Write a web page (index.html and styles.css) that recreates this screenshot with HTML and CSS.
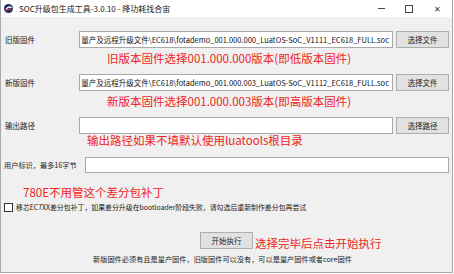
FILE: index.html
```html
<!DOCTYPE html>
<html lang="zh-CN">
<head>
  <meta charset="UTF-8" />
  <title>SOC升级包生成工具-3.0.10 - 降功耗找合宙</title>
  <link rel="stylesheet" href="styles.css">
</head>
<body>

<div class="window">
  <div class="titlebar">
    <svg class="app-icon" width="9" height="9" viewBox="0 0 10 10">
      <circle cx="5" cy="5" r="5" fill="#1d2b5e"/>
      <path d="M2 6 Q5 2 8.5 4" stroke="#fff" stroke-width="1.4" fill="none"/>
      <path d="M2 7.5 Q5 5 8 6" stroke="#e23b3b" stroke-width="1.2" fill="none"/>
    </svg>
    <span class="title">SOC升级包生成工具-3.0.10 - 降功耗找合宙</span>
    <div class="controls">
      <span class="ctl ctl-min"></span>
      <span class="ctl ctl-max"></span>
      <span class="ctl ctl-close">✕</span>
    </div>
  </div>

  <div class="content">
    <div class="row row-old">
      <label class="label">旧版固件</label>
      <div class="field"><span>量产及远程升级文件\EC618\fotademo_001.000.000_LuatOS-SoC_V1111_EC618_FULL.soc</span></div>
      <button class="btn">选择文件</button>
    </div>
    <div class="note note-old">旧版本固件选择001.000.000版本(即低版本固件)</div>

    <div class="row row-new">
      <label class="label">新版固件</label>
      <div class="field"><span>量产及远程升级文件\EC618\fotademo_001.000.003_LuatOS-SoC_V1112_EC618_FULL.soc</span></div>
      <button class="btn">选择文件</button>
    </div>
    <div class="note note-new">新版本固件选择001.000.003版本(即高版本固件)</div>

    <div class="row row-out">
      <label class="label">输出路径</label>
      <div class="field"></div>
      <button class="btn">选择路径</button>
    </div>
    <div class="note note-out">输出路径如果不填默认使用luatools根目录</div>

    <div class="row row-user">
      <label class="label label-wide">用户标识，最多16字节</label>
      <div class="field field-user"></div>
    </div>
    <div class="note note-780">780E不用管这个差分包补丁</div>

    <div class="check-row">
      <span class="checkbox"></span>
      <span>移芯EC7XX差分包补丁，如果差分升级在bootloader阶段失败，请勾选后重新制作差分包再尝试</span>
    </div>

    <div class="run-row">
      <button class="btn btn-run">开始执行</button>
      <span class="note note-run">选择完毕后点击开始执行</span>
    </div>

    <div class="footer-tip">新版固件必须有且是量产固件，旧版固件可以没有，可以是量产固件或者core固件</div>
  </div>
</div>

</body>
</html>
```

FILE: styles.css
```css
body {
  margin: 0;
  background: #ffffff;
  font-family: 'Noto Sans CJK SC', 'Noto Sans', sans-serif;
  color: #1a1a1a;
}

.window {
  width: 451px;
  height: 272px;
  border-left: 1px solid #a8a8a8;
  border-right: 1px solid #a8a8a8;
  border-bottom: 1px solid #a8a8a8;
  background: #f0f0f0;
  display: flex;
  flex-direction: column;
}

.titlebar {
  height: 17px;
  background: #ffffff;
  display: flex;
  align-items: center;
  padding-left: 3px;
}
.app-icon {
  margin-right: 6px;
}
.title {
  font-size: 8px;
  color: #222;
}
.controls {
  margin-left: auto;
  display: flex;
  align-items: center;
  height: 17px;
}
.ctl {
  width: 28px;
  display: flex;
  justify-content: center;
  align-items: center;
  font-size: 8px;
  color: #333;
}
.ctl-min::before {
  content: '';
  width: 7px;
  border-top: 1px solid #444;
}
.ctl-max::before {
  content: '';
  width: 6px;
  height: 6px;
  border: 1px solid #444;
}
.ctl-close {
  margin-right: 1px;
}

.content {
  display: flex;
  flex-direction: column;
}

.row {
  display: flex;
  align-items: center;
  height: 17px;
}
.row-old { margin-top: 14px; }
.row-new { margin-top: 8px; }
.row-out { margin-top: 8px; }
.row-user { margin-top: 9px; height: 16px; }

.label {
  width: 74px;
  padding-left: 4px;
  font-size: 7.5px;
}
.label-wide {
  width: 81px;
  padding-left: 3px;
  font-size: 7.2px;
  white-space: nowrap;
}

.field {
  box-sizing: border-box;
  width: 314px;
  height: 17px;
  background: #ffffff;
  border: 1px solid #a9a9a9;
  display: flex;
  justify-content: flex-end;
  align-items: center;
  overflow: hidden;
  white-space: nowrap;
  font-size: 7.5px;
  padding-right: 3px;
  color: #111;
}
.field-user {
  width: 364px;
  height: 16px;
}

.btn {
  box-sizing: border-box;
  width: 53px;
  height: 17px;
  margin-left: 3px;
  padding: 0;
  background: #e1e1e1;
  border: 1px solid #adadad;
  font-family: inherit;
  font-size: 7.5px;
  color: #222;
}

.note {
  color: #ef2323;
  font-size: 11.5px;
  line-height: 16px;
  height: 16px;
  white-space: nowrap;
}
.note-old { margin-top: 2px; padding-left: 106px; }
.note-new { margin-top: 2px; padding-left: 106px; }
.note-out { margin-top: -2px; padding-left: 86px; }
.note-780 { margin-top: 11px; padding-left: 22px; }

.check-row {
  display: flex;
  align-items: center;
  height: 12px;
  margin-top: 1px;
  padding-left: 3px;
  font-size: 6.9px;
  white-space: nowrap;
}
.checkbox {
  box-sizing: border-box;
  width: 9px;
  height: 9px;
  background: #ffffff;
  border: 1px solid #333;
  margin-right: 3px;
}

.run-row {
  display: flex;
  align-items: center;
  margin-top: 19px;
  padding-left: 199px;
  height: 17px;
}
.btn-run {
  margin-left: 0;
}
.note-run {
  margin-left: 2px;
  margin-top: 4px;
}

.footer-tip {
  margin-top: 5px;
  padding-left: 92px;
  font-size: 7.2px;
  white-space: nowrap;
}
```
